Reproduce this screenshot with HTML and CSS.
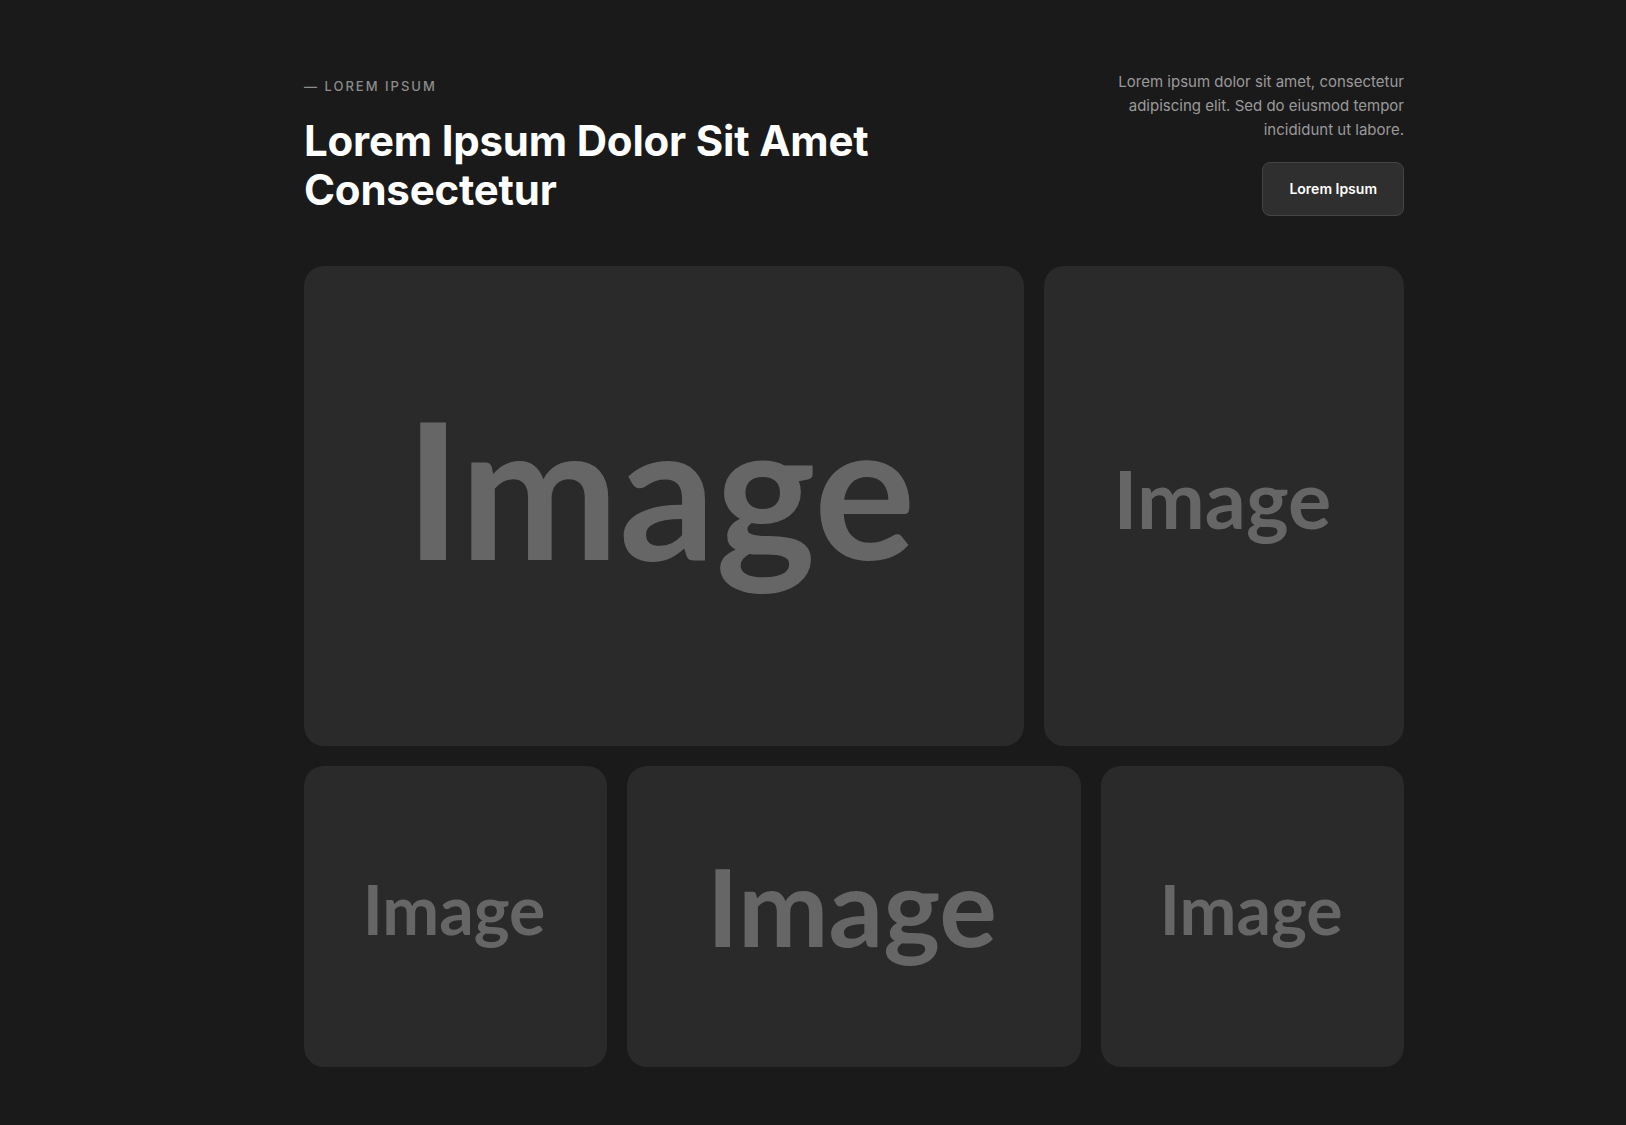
FILE: index.html
```html
<!DOCTYPE html>
<html lang="en">
<head>
    <meta charset="UTF-8">
    <title>Lorem Ipsum Gallery</title>
    <link rel="stylesheet" href="styles.css">
</head>
<body>
    <div class="page">
        <header class="header">
            <div class="intro">
                <div class="eyebrow">— Lorem Ipsum</div>
                <h1>Lorem Ipsum Dolor Sit Amet Consectetur</h1>
            </div>
            <div class="aside">
                <p>Lorem ipsum dolor sit amet, consectetur adipiscing elit. Sed do eiusmod tempor incididunt ut labore.</p>
                <button class="btn">Lorem Ipsum</button>
            </div>
        </header>

        <div class="grid row-top">
            <div class="tile"><span class="ph ph-xl">Image</span></div>
            <div class="tile"><span class="ph ph-md">Image</span></div>
        </div>
        <div class="grid row-bottom">
            <div class="tile"><span class="ph ph-sm">Image</span></div>
            <div class="tile"><span class="ph ph-lg">Image</span></div>
            <div class="tile"><span class="ph ph-sm">Image</span></div>
        </div>
    </div>
</body>
</html>
```

FILE: styles.css
```css
body { margin: 0; background-color: #1a1a1a; font-family: 'Inter', 'Liberation Sans', sans-serif; color: #fff; }
.page { width: 1100px; margin-left: 304px; padding: 70px 0; }

.header { display: flex; justify-content: space-between; align-items: flex-end; margin-bottom: 50px; }
.eyebrow { font-size: 13px; line-height: 20px; font-weight: 500; letter-spacing: 2px; text-transform: uppercase; color: #8c8c8c; margin-bottom: 21px; }
h1 { margin: 0 0 2px; max-width: 620px; font-size: 42px; line-height: 1.15; font-weight: 700; letter-spacing: -0.2px; color: #fff; }

.aside { display: flex; flex-direction: column; align-items: flex-end; text-align: right; }
.aside p { margin: 0 0 20px; max-width: 300px; font-size: 15px; line-height: 24px; color: #9a9a9a; }
.btn { padding: 16px 26px; font-family: inherit; font-size: 14px; line-height: 20px; font-weight: 600; color: #fff; background-color: #2f2f2f; border: 1px solid #444; border-radius: 8px; cursor: pointer; }

.grid { display: grid; gap: 20px; }
.row-top { grid-template-columns: 2fr 1fr; height: 480px; margin-bottom: 20px; }
.row-bottom { grid-template-columns: 2fr 3fr 2fr; height: 301px; }

.tile { display: flex; align-items: center; justify-content: center; background-color: #2a2a2a; border-radius: 20px; overflow: hidden; }
.ph { font-family: 'Lato', sans-serif; font-weight: 700; line-height: 1; color: #666; padding: 0 0.04em 0.21em 0; }
.ph-xl { font-size: 190px; }
.ph-md { font-size: 81px; }
.ph-lg { font-size: 108px; }
.ph-sm { font-size: 68px; }
```
